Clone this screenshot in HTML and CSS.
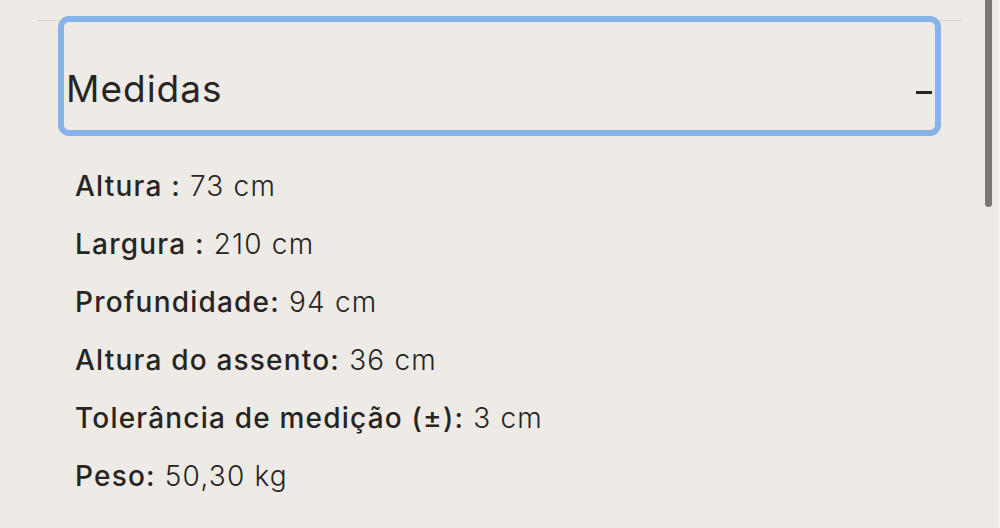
FILE: index.html
```html
<!DOCTYPE html>
<html lang="pt">
<head>
<meta charset="utf-8">
<link rel="stylesheet" href="styles.css">
</head>
<body>
<div class="page">
  <section class="accordion">
    <div class="header">
      <h2 class="title">Medidas</h2>
      <span class="toggle"></span>
    </div>
    <ul class="specs">
      <li><b>Altura :</b> 73 cm</li>
      <li><b>Largura :</b> 210 cm</li>
      <li><b>Profundidade:</b> 94 cm</li>
      <li><b>Altura do assento:</b> 36 cm</li>
      <li><b>Tolerância de medição (±):</b> 3 cm</li>
      <li><b>Peso:</b> 50,30 kg</li>
    </ul>
  </section>
  <div class="scrollbar"><div class="thumb"></div></div>
</div>
</body>
</html>
```
FILE: styles.css
```css
html, body {
  margin: 0;
  padding: 0;
  background: #eeebe6;
  height: 100%;
  overflow: hidden;
}
.page {
  position: relative;
  height: 528px;
  padding-top: 20px;
  box-sizing: border-box;
  font-family: Inter, "Noto Sans", sans-serif;
  color: #262523;
}
.accordion {
  margin: 0 38px 0 37px;
  border-top: 1px solid #d9d6d1;
}
.header {
  margin: 1px 27px 0 27px;
  height: 108px;
  box-sizing: border-box;
  display: flex;
  align-items: center;
  justify-content: space-between;
  padding: 25px 3px 0 2px;
  outline: 6px solid #86b4ea;
  border-radius: 5px;
}
.title {
  margin: 0;
  font-size: 37px;
  font-weight: 400;
  letter-spacing: 1px;
  line-height: 1;
}
.toggle {
  width: 16px;
  height: 3px;
  background: #262523;
  margin-top: 8px;
}
.specs {
  list-style: none;
  margin: 27px 0 0 38px;
  padding: 0;
}
.specs li {
  height: 58px;
  line-height: 58px;
  font-size: 28px;
  font-weight: 300;
  letter-spacing: 1.2px;
}
.specs b {
  font-weight: 500;
}
.scrollbar {
  position: absolute;
  top: 0;
  right: 0;
  width: 14px;
  height: 528px;
  border-right: 1px solid #f7f6f3;
}
.thumb {
  position: absolute;
  top: -4px;
  left: 0;
  width: 7px;
  height: 211px;
  border-radius: 4px;
  background: #7a7673;
}
```
